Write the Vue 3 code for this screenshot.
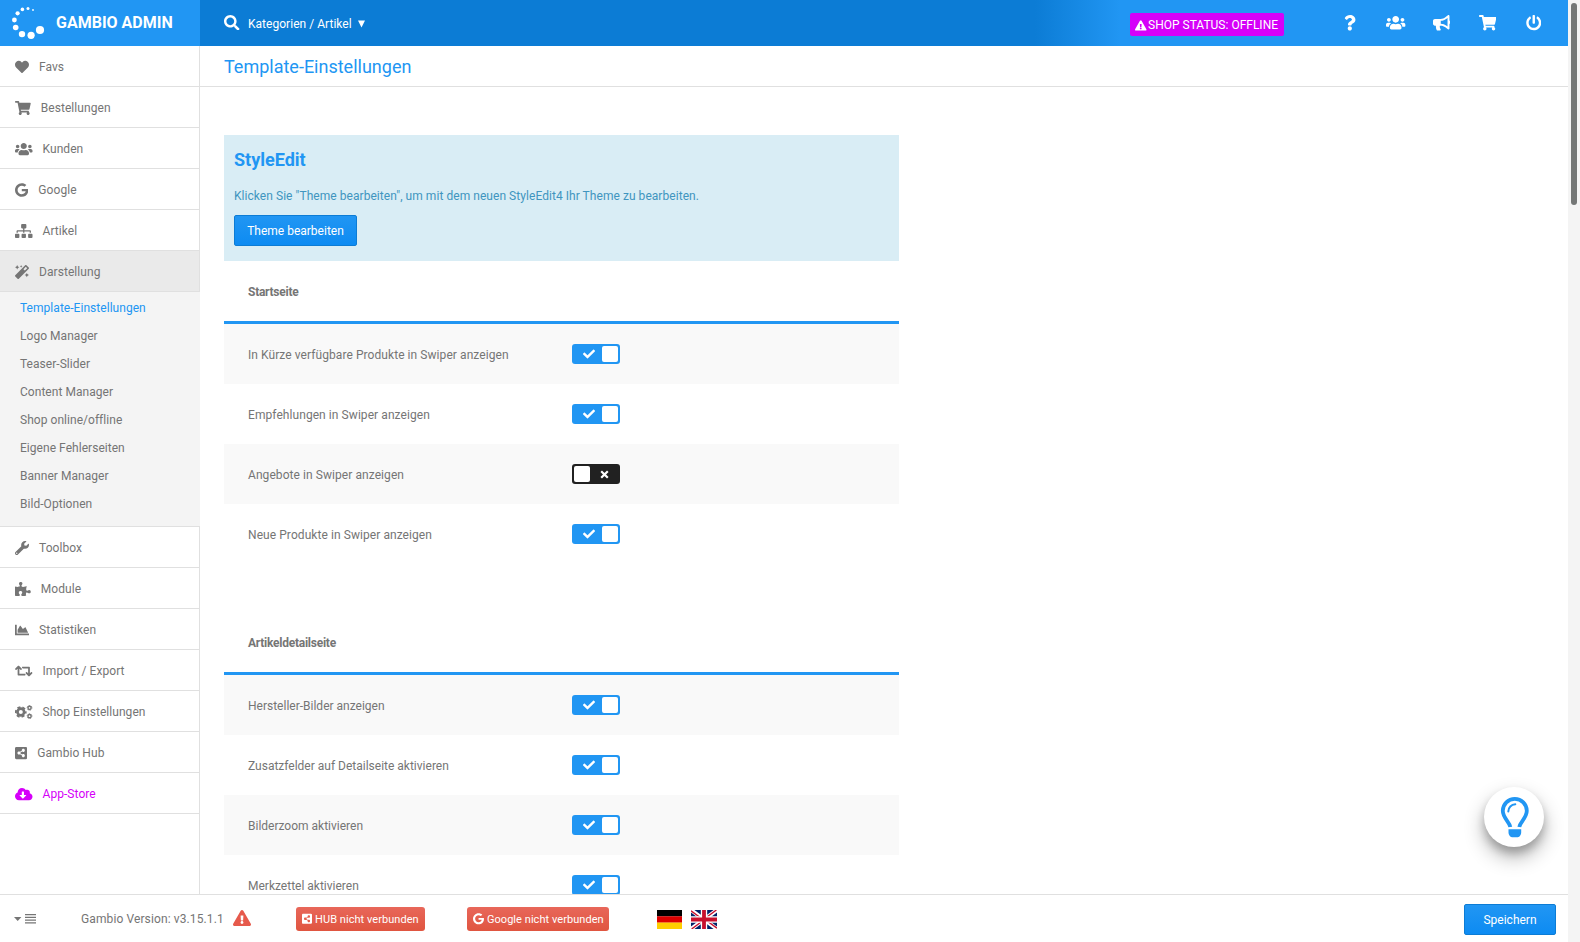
<script setup>
const icons = {
  heart: [512, 'M462.3 62.6C407.5 15.9 326 24.3 275.7 76.2L256 96.5l-19.7-20.3C186.1 24.3 104.5 15.9 49.7 62.6c-62.8 53.6-66.1 149.8-9.9 207.9l193.5 199.8c12.5 12.9 32.8 12.9 45.3 0l193.5-199.8c56.3-58.1 53-154.3-9.8-207.9z'],
  cart: [576, 'M528.12 301.319l47.273-208C578.806 78.301 567.391 64 551.99 64H159.208l-9.166-44.81C147.758 8.021 137.93 0 126.529 0H24C10.745 0 0 10.745 0 24v16c0 13.255 10.745 24 24 24h69.883l70.248 343.435C147.325 417.1 136 435.222 136 456c0 30.928 25.072 56 56 56s56-25.072 56-56c0-15.674-6.447-29.835-16.824-40h209.647C430.447 426.165 424 440.326 424 456c0 30.928 25.072 56 56 56s56-25.072 56-56c0-22.172-12.888-41.332-31.579-50.405l5.517-24.276c3.413-15.018-8.002-29.319-23.403-29.319H218.117l-6.545-32h293.145c11.206 0 20.92-7.754 23.403-18.681z'],
  users: [640, 'M96 224c35.3 0 64-28.7 64-64s-28.7-64-64-64-64 28.7-64 64 28.7 64 64 64zm448 0c35.3 0 64-28.7 64-64s-28.7-64-64-64-64 28.7-64 64 28.7 64 64 64zm32 32h-64c-17.6 0-33.5 7.1-45.1 18.6 40.3 22.1 68.9 62 75.1 109.4h66c17.7 0 32-14.3 32-32v-32c0-35.3-28.7-64-64-64zm-256 0c61.9 0 112-50.1 112-112S381.9 32 320 32 208 82.1 208 144s50.1 112 112 112zm76.8 32h-8.3c-20.8 10-43.9 16-68.5 16s-47.6-6-68.5-16h-8.3C179.6 288 128 339.6 128 403.2V432c0 26.5 21.5 48 48 48h288c26.5 0 48-21.5 48-48v-28.8c0-63.6-51.6-115.2-115.2-115.2zm-223.7-13.4C161.5 263.1 145.6 256 128 256H64c-35.3 0-64 28.7-64 64v32c0 17.7 14.3 32 32 32h65.9c6.3-47.4 34.9-87.3 75.2-109.4z'],
  google: [488, 'M488 261.8C488 403.3 391.1 504 248 504 110.8 504 0 393.2 0 256S110.8 8 248 8c66.8 0 123 24.5 166.3 64.9l-67.5 64.9C258.5 52.6 94.3 116.6 94.3 256c0 86.5 69.1 156.6 153.7 156.6 98.2 0 135-70.4 140.8-106.9H248v-85.3h236.1c2.3 12.7 3.9 24.9 3.9 41.4z'],
  sitemap: [640, 'M128 352H32c-17.67 0-32 14.33-32 32v96c0 17.67 14.33 32 32 32h96c17.67 0 32-14.33 32-32v-96c0-17.67-14.33-32-32-32zm-24-80h192v48h48v-48h192v48h48v-57.59c0-21.17-17.23-38.41-38.41-38.41H344v-64h40c17.67 0 32-14.33 32-32V32c0-17.67-14.33-32-32-32H256c-17.67 0-32 14.33-32 32v96c0 17.67 14.33 32 32 32h40v64H94.41C73.23 224 56 241.23 56 262.41V320h48v-48zm264 80h-96c-17.67 0-32 14.33-32 32v96c0 17.67 14.33 32 32 32h96c17.67 0 32-14.33 32-32v-96c0-17.67-14.33-32-32-32zm240 0h-96c-17.67 0-32 14.33-32 32v96c0 17.67 14.33 32 32 32h96c17.67 0 32-14.33 32-32v-96c0-17.67-14.33-32-32-32z'],
  magic: [512, 'M224 96l16-32 32-16-32-16-16-32-16 32-32 16 32 16 16 32zM80 160l26.66-53.33L160 80l-53.34-26.67L80 0 53.34 53.33 0 80l53.34 26.67L80 160zm352 128l-26.66 53.33L352 368l53.34 26.67L432 448l26.66-53.33L512 368l-53.34-26.67L432 288zm70.62-193.77L417.77 9.38C411.53 3.12 403.34 0 395.15 0c-8.19 0-16.38 3.12-22.63 9.38L9.38 372.52c-12.5 12.5-12.5 32.76 0 45.25l84.85 84.85c6.25 6.25 14.44 9.37 22.62 9.37 8.19 0 16.38-3.12 22.63-9.37l363.14-363.15c12.5-12.48 12.5-32.75 0-45.24zM359.45 203.46l-50.91-50.91 86.6-86.6 50.91 50.91-86.6 86.6z'],
  wrench: [512, 'M507.73 109.1c-2.24-9.03-13.54-12.09-20.12-5.51l-74.36 74.36-67.88-11.31-11.31-67.88 74.36-74.36c6.62-6.62 3.43-17.9-5.66-20.16-47.38-11.74-99.55.91-136.58 37.93-39.64 39.64-50.55 97.1-34.05 147.2L18.74 402.76c-24.99 24.99-24.99 65.51 0 90.5 24.99 24.99 65.51 24.99 90.5 0l213.21-213.21c50.12 16.71 107.47 5.68 147.37-34.22 37.07-37.07 49.7-89.32 37.91-136.73zM64 472c-13.25 0-24-10.75-24-24 0-13.26 10.75-24 24-24s24 10.74 24 24c0 13.25-10.75 24-24 24z'],
  puzzle: [576, 'M519.442 288.651c-41.519 0-59.5 31.593-82.058 31.593C377.409 320.244 432 144 432 144s-196.288 80-196.288-3.297c0-35.827 36.288-46.25 36.288-85.985C272 19.216 243.885 0 210.539 0c-34.654 0-66.366 18.891-66.366 56.346 0 41.364 31.711 59.277 31.711 81.75C175.885 207.719 0 166.758 0 166.758v333.237s178.635 41.047 178.635-28.662c0-22.473-40-40.107-40-81.471 0-37.456 29.25-56.346 63.577-56.346 33.673 0 61.788 19.216 61.788 54.717 0 39.735-36.288 50.158-36.288 85.985 0 60.803 129.675 25.73 181.23 25.73 0 0-34.725-120.101 25.827-120.101 35.962 0 46.423 36.152 86.308 36.152C556.712 416 576 387.99 576 354.443c0-34.199-18.962-65.792-56.558-65.792z'],
  chart: [512, 'M500 384c6.6 0 12 5.4 12 12v40c0 6.6-5.4 12-12 12H12c-6.6 0-12-5.4-12-12V76c0-6.6 5.4-12 12-12h40c6.6 0 12 5.4 12 12v308h436zM372.7 159.5L288 216l-85.3-113.7c-5.1-6.8-15.5-6.3-19.9 1L96 248v104h384l-89.9-187.8c-3.2-6.5-11.4-8.7-17.4-4.7z'],
  retweet: [640, 'M629.657 343.598L528.971 444.284c-9.373 9.372-24.568 9.372-33.941 0L394.343 343.598c-9.373-9.373-9.373-24.569 0-33.941l10.823-10.823c9.562-9.562 25.133-9.34 34.419.492L480 342.118V160H292.451a24.005 24.005 0 0 1-16.971-7.029l-16-16C244.361 121.851 255.069 96 276.451 96H520c13.255 0 24 10.745 24 24v222.118l40.416-42.792c9.285-9.831 24.856-10.054 34.419-.492l10.823 10.823c9.372 9.372 9.372 24.569-.001 33.941zm-265.138 15.431A23.999 23.999 0 0 0 347.548 352H160V169.881l40.416 42.792c9.286 9.831 24.856 10.054 34.419.491l10.822-10.822c9.373-9.373 9.373-24.569 0-33.941L144.971 67.716c-9.373-9.373-24.569-9.373-33.941 0L10.343 168.402c-9.373 9.373-9.373 24.569 0 33.941l10.822 10.822c9.562 9.562 25.133 9.34 34.419-.491L96 169.881V392c0 13.255 10.745 24 24 24h243.549c21.382 0 32.09-25.851 16.971-40.971l-16.001-16z'],
  share: [448, 'M448 80v352c0 26.51-21.49 48-48 48H48c-26.51 0-48-21.49-48-48V80c0-26.51 21.49-48 48-48h352c26.51 0 48 21.49 48 48zM304 296c-14.562 0-27.823 5.561-37.783 14.671l-67.958-40.775a56.339 56.339 0 0 0 0-27.793l67.958-40.775C276.177 210.439 289.438 216 304 216c30.928 0 56-25.072 56-56s-25.072-56-56-56-56 25.072-56 56c0 4.797.605 9.453 1.74 13.897l-67.958 40.775C171.823 205.561 158.562 200 144 200c-30.928 0-56 25.072-56 56s25.072 56 56 56c14.562 0 27.823-5.561 37.783-14.671l67.958 40.775a56.088 56.088 0 0 0-1.741 13.897c0 30.928 25.072 56 56 56s56-25.072 56-56S334.928 296 304 296z'],
  cloud: [640, 'M537.6 226.6c4.1-10.7 6.4-22.4 6.4-34.6 0-53-43-96-96-96-19.7 0-38.1 6-53.3 16.2C367 64.2 315.3 32 256 32c-88.4 0-160 71.6-160 160 0 2.7.1 5.4.2 8.1C40.2 219.8 0 273.2 0 336c0 79.5 64.5 144 144 144h368c70.7 0 128-57.3 128-128 0-61.9-44-113.6-102.4-125.4zm-132.9 88.7L299.3 420.7c-6.2 6.2-16.4 6.2-22.6 0L171.3 315.3c-10.1-10.1-2.9-27.3 11.3-27.3H248V176c0-8.8 7.2-16 16-16h48c8.8 0 16 7.2 16 16v112h65.4c14.2 0 21.4 17.2 11.3 27.3z'],
  search: [512, 'M505 442.7L405.3 343c-4.5-4.5-10.6-7-17-7H372c27.6-35.3 44-79.7 44-128C416 93.1 322.9 0 208 0S0 93.1 0 208s93.1 208 208 208c48.3 0 92.7-16.4 128-44v16.3c0 6.4 2.5 12.5 7 17l99.7 99.7c9.4 9.4 24.6 9.4 33.9 0l28.3-28.3c9.4-9.4 9.4-24.6.1-34zM208 336c-70.7 0-128-57.2-128-128 0-70.7 57.2-128 128-128 70.7 0 128 57.2 128 128 0 70.7-57.2 128-128 128z'],
  question: [384, 'M202.021 0C122.202 0 70.503 32.703 29.914 91.026c-7.363 10.58-5.093 25.086 5.178 32.874l43.138 32.709c10.373 7.865 25.132 6.026 33.253-4.148 25.049-31.381 43.63-49.449 82.757-49.449 30.764 0 68.816 19.799 68.816 49.631 0 22.552-18.617 34.134-48.993 51.164-35.423 19.86-82.299 44.576-82.299 106.405V320c0 13.255 10.745 24 24 24h72.471c13.255 0 24-10.745 24-24v-5.773c0-42.86 125.268-44.645 125.268-160.627C377.504 66.256 286.902 0 202.021 0zM192 373.459c-38.196 0-69.271 31.075-69.271 69.271 0 38.195 31.075 69.27 69.271 69.27s69.271-31.075 69.271-69.271-31.075-69.27-69.271-69.27z'],
  bullhorn: [576, 'M576 240c0-23.63-12.95-44.04-32-55.12V32.01C544 23.26 537.02 0 512 0c-7.12 0-14.19 2.38-19.98 7.02l-85.03 68.03C364.28 109.19 310.66 128 256 128H64c-35.35 0-64 28.65-64 64v96c0 35.35 28.65 64 64 64h33.7c-1.39 10.48-2.18 21.14-2.18 32 0 39.77 9.26 77.35 25.56 110.94 5.19 10.69 16.52 17.06 28.4 17.06h74.28c26.05 0 41.69-29.84 25.9-50.56-16.4-21.52-26.15-48.36-26.15-77.44 0-11.11 1.62-21.79 4.41-32H256c54.66 0 108.28 18.81 150.98 52.95l85.03 68.03a32.023 32.023 0 0 0 19.98 7.02c24.92 0 32-22.78 32-32V295.13C563.05 284.04 576 263.63 576 240zm-96 141.42l-33.05-26.44C392.95 311.78 325.12 288 256 288v-96c69.12 0 136.95-23.78 190.95-66.98L480 98.58v282.84z'],
  power: [512, 'M400 54.1c63 45 104 118.6 104 201.9 0 136.8-110.8 247.7-247.5 248C120 504.3 8.2 393 8 256.4 7.9 173.1 48.9 99.3 111.8 54.2c11.7-8.3 28-4.8 35 7.7L162.6 90c5.9 10.5 3.1 23.8-6.6 31-41.5 30.8-68 79.6-68 134.9-.1 92.3 74.5 168.1 168 168.1 91.6 0 168.6-74.2 168-169.1-.3-51.8-24.7-101.8-68.1-134-9.7-7.2-12.4-20.5-6.5-30.9l15.8-28.1c7-12.4 23.2-16.1 34.8-7.8zM296 264V24c0-13.3-10.7-24-24-24h-32c-13.3 0-24 10.7-24 24v240c0 13.3 10.7 24 24 24h32c13.3 0 24-10.7 24-24z'],
  warning: [576, 'M569.517 440.013C587.975 472.007 564.806 512 527.94 512H48.054c-36.937 0-59.999-40.055-41.577-71.987L246.423 23.985c18.467-32.009 64.72-31.951 83.154 0l239.94 416.028zM288 354c-25.405 0-46 20.595-46 46s20.595 46 46 46 46-20.595 46-46-20.595-46-46-46zm-43.673-165.346l7.418 136c.347 6.364 5.609 11.346 11.982 11.346h48.546c6.373 0 11.635-4.982 11.982-11.346l7.418-136c.375-6.874-5.098-12.654-11.982-12.654h-63.383c-6.884 0-12.356 5.78-11.981 12.654z'],
  check: [512, 'M173.898 439.404l-166.4-166.4c-9.997-9.997-9.997-26.206 0-36.204l36.203-36.204c9.997-9.998 26.207-9.998 36.204 0L192 312.69 432.095 72.596c9.997-9.997 26.207-9.997 36.204 0l36.203 36.204c9.997 9.997 9.997 26.206 0 36.204l-294.4 294.401c-9.998 9.997-26.207 9.997-36.204-.001z']
}
const vb = (n) => `0 0 ${icons[n][0]} 512`

const menu = [
  { icon: 'heart', label: 'Favs' },
  { icon: 'cart', label: 'Bestellungen' },
  { icon: 'users', label: 'Kunden' },
  { icon: 'google', label: 'Google' },
  { icon: 'sitemap', label: 'Artikel' },
  {
    icon: 'magic', label: 'Darstellung', active: true,
    children: ['Template-Einstellungen', 'Logo Manager', 'Teaser-Slider', 'Content Manager', 'Shop online/offline', 'Eigene Fehlerseiten', 'Banner Manager', 'Bild-Optionen']
  },
  { icon: 'wrench', label: 'Toolbox' },
  { icon: 'puzzle', label: 'Module' },
  { icon: 'chart', label: 'Statistiken' },
  { icon: 'retweet', label: 'Import / Export' },
  { icon: 'cogs', label: 'Shop Einstellungen' },
  { icon: 'share', label: 'Gambio Hub' },
  { icon: 'cloud', label: 'App-Store', store: true }
]
const tools = ['question', 'users', 'bullhorn', 'cart', 'power']
const sections = [
  {
    title: 'Startseite',
    rows: [
      ['In Kürze verfügbare Produkte in Swiper anzeigen', true],
      ['Empfehlungen in Swiper anzeigen', true],
      ['Angebote in Swiper anzeigen', false],
      ['Neue Produkte in Swiper anzeigen', true]
    ]
  },
  {
    title: 'Artikeldetailseite',
    rows: [
      ['Hersteller-Bilder anzeigen', true],
      ['Zusatzfelder auf Detailseite aktivieren', true],
      ['Bilderzoom aktivieren', true],
      ['Merkzettel aktivieren', true]
    ]
  }
]
</script>

<template>
  <div class="window">
    <div class="page">
      <header class="header">
        <div class="brand">
          <svg class="logo" width="34" height="34" viewBox="0 0 34 34" fill="#fff">
            <circle cx="22" cy="4" r=".9" /><circle cx="17" cy="2.6" r="1.5" /><circle cx="11.4" cy="3.4" r="1.8" />
            <circle cx="6.6" cy="7.3" r="2.1" /><circle cx="3.4" cy="14" r="2.4" /><circle cx="4.7" cy="21.5" r="2.8" />
            <circle cx="11" cy="28.1" r="3.2" /><circle cx="20.1" cy="29.3" r="3.6" /><circle cx="29" cy="24" r="4.1" />
          </svg>
          <span>GAMBIO ADMIN</span>
        </div>
        <div class="topbar">
          <svg class="search" width="15.5" height="15.500" :viewBox="vb('search')"><path :d="icons.search[1]" /></svg>
          <span class="scope">Kategorien / Artikel <svg width="7" height="8" viewBox="0 0 7 8"><path d="M0 .5h7L3.5 7.5z" /></svg></span>
          <div class="status">
            <svg width="11.5" height="11" :viewBox="vb('warning')"><path :d="icons.warning[1]" /></svg>
            <span>SHOP STATUS: OFFLINE</span>
          </div>
          <nav class="tools">
            <a v-for="t in tools" :key="t"><svg height="15.500" :viewBox="vb(t)"><path :d="icons[t][1]" /></svg></a>
          </nav>
        </div>
      </header>

      <div class="body">
        <aside class="sidebar">
          <template v-for="m in menu" :key="m.label">
            <div class="item" :class="{ active: m.active, store: m.store }">
              <svg v-if="m.icon === 'cogs'" width="17.5" height="14" viewBox="0 0 640 512" fill="none" stroke="currentColor">
                <circle cx="212" cy="256" r="122" stroke-width="96" />
                <circle cx="212" cy="256" r="180" stroke-width="68" stroke-dasharray="108.500 80" stroke-dashoffset="54" />
                <circle cx="532" cy="104" r="58" stroke-width="52" />
                <circle cx="532" cy="104" r="88" stroke-width="28" stroke-dasharray="52 40.200" stroke-dashoffset="26" />
                <circle cx="532" cy="408" r="58" stroke-width="52" />
                <circle cx="532" cy="408" r="88" stroke-width="28" stroke-dasharray="52 40.200" stroke-dashoffset="26" />
              </svg>
              <svg v-else height="14" :viewBox="vb(m.icon)"><path :d="icons[m.icon][1]" /></svg>
              <span>{{ m.label }}</span>
            </div>
            <div v-if="m.children" class="submenu">
              <a v-for="(c, i) in m.children" :key="c" :class="{ current: i === 0 }">{{ c }}</a>
            </div>
          </template>
        </aside>

        <main class="content">
          <h1>Template-Einstellungen</h1>
          <div class="panel">
            <div class="info">
              <h2>StyleEdit</h2>
              <p>Klicken Sie "Theme bearbeiten", um mit dem neuen StyleEdit4 Ihr Theme zu bearbeiten.</p>
              <button class="btn theme">Theme bearbeiten</button>
            </div>
            <section v-for="s in sections" :key="s.title">
              <h3>{{ s.title }}</h3>
              <div v-for="r in s.rows" :key="r[0]" class="row">
                <label>{{ r[0] }}</label>
                <span class="switch" :class="{ off: !r[1] }">
                  <svg v-if="r[1]" class="mark" width="12" height="12" :viewBox="vb('check')"><path :d="icons.check[1]" /></svg>
                  <i class="knob"></i>
                  <svg v-if="!r[1]" class="cross" width="9" height="9" viewBox="0 0 9 9"><path d="M1.2 1.2l6.600 6.600M7.800 1.200L1.200 7.800" /></svg>
                </span>
              </div>
            </section>
          </div>
        </main>
      </div>

      <footer class="footer">
        <svg class="collapse" width="22" height="12" viewBox="0 0 22 12">
          <path d="M0 4h7.4L3.7 8z" />
          <path d="M11 .9h11v1.300H11zM11 3.700h11v1.300H11zM11 6.500h11v1.300H11zM11 9.300h11v1.300H11z" />
        </svg>
        <span class="version">Gambio Version: v3.15.1.1</span>
        <svg class="alert" width="18" height="16" :viewBox="vb('warning')"><path :d="icons.warning[1]" /></svg>
        <span class="badge hub"><svg height="11.5" :viewBox="vb('share')"><path :d="icons.share[1]" /></svg><span>HUB nicht verbunden</span></span>
        <span class="badge goog"><svg height="11.5" :viewBox="vb('google')"><path :d="icons.google[1]" /></svg><span>Google nicht verbunden</span></span>
        <svg class="de" width="25" height="19" viewBox="0 0 25 19">
          <path fill="#000" d="M0 0h25v6.4H0z" /><path fill="#d00" d="M0 6.3h25v6.4H0z" /><path fill="#ffce00" d="M0 12.6h25V19H0z" />
        </svg>
        <svg class="uk" width="26" height="19" viewBox="0 0 26 19">
          <path fill="#012169" d="M0 0h26v19H0z" />
          <path stroke="#fff" stroke-width="4" d="M0 0l26 19M26 0L0 19" />
          <path stroke="#c8102e" stroke-width="1.4" d="M0 .8l12 8.7M26 18.2L14 9.5M25.4 0L13.5 8.7M.6 19l11.9-8.7" />
          <path stroke="#fff" stroke-width="6.4" d="M13 0v19M0 9.5h26" />
          <path stroke="#c8102e" stroke-width="3.8" d="M13 0v19M0 9.5h26" />
        </svg>
        <button class="btn save">Speichern</button>
      </footer>

      <div class="hint">
        <svg width="60" height="60" viewBox="0 0 60 60" fill="none" stroke="#2196f3">
          <path stroke-width="3.8" d="M26.3 40c-.8-5.400-7.500-9-7.500-16.200a12 12 0 0 1 24 0c0 7.200-6.700 10.800-7.500 16.200" />
          <path stroke-width="2" stroke-linecap="round" d="M24.300 24.500c0-4 3-7 7-7.200" />
          <path stroke="none" fill="#2196f3" d="M24.500 42.300h12.700v3.200c0 2-1.500 4.700-3.500 4.700h-5.700c-2 0-3.500-2.700-3.500-4.700z" />
        </svg>
      </div>
    </div>
    <div class="scrollbar"><div class="thumb"></div></div>
  </div>
</template>

<style>
body { margin: 0; overflow: hidden; }
</style>

<style scoped>
.window { display: flex; width: 1580px; height: 942px; overflow: hidden; background: #fff; color: #757575; font: 12px/20px Roboto, "Liberation Sans", sans-serif; }
.window * { box-sizing: border-box; }
svg { display: block; fill: currentColor; flex: none; }
svg[fill="none"] { fill: none; }
.page { position: relative; width: 1568px; display: flex; flex-direction: column; }
.scrollbar { width: 12px; background: #f4f4f4; padding: 3px; }
.thumb { width: 6px; height: 202px; border-radius: 3px; background: #747776; }

.header { display: flex; height: 46px; color: #fff; flex: none; }
.brand { width: 200px; display: flex; align-items: center; background: #2196f3; padding-left: 11px; font-size: 16px; font-weight: 700; }
.logo { margin-right: 11px; }
.topbar { flex: 1; display: flex; align-items: center; padding-left: 24px; padding-right: 11px; background: linear-gradient(to right, #0c7cd5 835px, #2196f3 920px); }
.search { margin-right: 8.5px; margin-top: -1px; }
.scope { display: flex; align-items: center; gap: 6px; padding-top: 1px; letter-spacing: .03px; }
.status { display: flex; align-items: center; gap: 1.5px; height: 23px; width: 154px; margin-left: auto; margin-top: 3px; padding-left: 5px; border-radius: 2px; background: #d500f9; white-space: nowrap; }
.status svg { margin-top: 1px; }
.tools { display: flex; margin-left: 43px; margin-right: .5px; }
.tools a { width: 45.9px; display: flex; justify-content: center; }

.body { display: flex; flex: 1; min-height: 0; overflow: hidden; }
.sidebar { width: 200px; border-right: 1px solid #e0e0e0; flex: none; }
.item { display: flex; align-items: center; gap: 10px; height: 41px; padding: 1px 0 0 15px; border-bottom: 1px solid #e0e0e0; letter-spacing: .06px; }
.item span { padding-top: 1px; }
.item.active { background: #eaeaea; }
.item.store { color: #d500f9; }
.submenu { height: 235px; padding: 2px 0 0 20px; margin-right: -1px; background: #f4f4f4; border-bottom: 1px solid #e0e0e0; letter-spacing: .04px; }
.submenu a { display: block; line-height: 28px; }
.submenu .current { color: #2196f3; }

.content { flex: 1; min-width: 0; }
h1 { margin: 0; height: 41px; padding-left: 24px; border-bottom: 1px solid #e0e0e0; font-size: 18px; font-weight: 400; line-height: 41px; color: #2196f3; }
.panel { width: 675px; margin: 48px 0 0 24px; }
.info { height: 126px; padding: 14px 10px 0; background: #d9edf5; color: #4095bf; }
h2 { margin: 0; font-size: 18px; line-height: 22px; font-weight: 700; color: #2196f3; }
p { margin: 15px 0 9px; letter-spacing: .05px; }
.btn { display: block; height: 31px; padding: 0; border: 1px solid #0c7cd5; border-radius: 2px; background: linear-gradient(#2196f3, #0d8bf2); color: #fff; font: inherit; }
.theme { width: 123px; }
section + section { margin-top: 48px; }
h3 { margin: 0; height: 63px; padding: 21px 24px 0; border-bottom: 3px solid #2196f3; font-size: 12px; line-height: 20px; font-weight: 700; letter-spacing: -.25px; }
.row { display: flex; height: 60px; padding: 20px 24px; }
.row:nth-child(even) { background: #f9f9f9; }
.row label { width: 324px; padding-top: 1px; }
section:nth-child(2) label { letter-spacing: .07px; }
.switch { display: flex; align-items: center; width: 48px; height: 20px; padding: 2px; border-radius: 3px; background: #2196f3; color: #fff; }
.switch.off { background: #212121; }
.mark { margin-left: 9px; }
.knob { width: 16px; height: 16px; border-radius: 2px; background: #fff; margin-left: auto; }
.off .knob { margin-left: 0; }
.cross { fill: none; stroke: #fff; stroke-width: 2.2; margin: 1px 0 0 9.500px; }

.footer { display: flex; align-items: center; height: 48px; flex: none; border-top: 1px solid #e0e0e0; padding: 1px 12px 0 14px; background: #fff; }
.collapse { margin-top: -1px; }
.version { margin-left: 45px; width: 143px; letter-spacing: .11px; white-space: nowrap; }
.alert { margin-left: 9px; color: #e65a4c; margin-top: -2px; }
.badge { display: flex; align-items: center; height: 24px; gap: 3px; padding-left: 6px; border-radius: 3px; background: linear-gradient(#e8675a, #e05540); color: #fff; font-size: 11px; white-space: nowrap; letter-spacing: .05px; }
.badge span { padding-top: 1px; }
.hub { width: 129px; margin-left: 45px; }
.goog { width: 142px; margin-left: 42px; }
.de { margin-left: 48px; }
.uk { margin-left: 9px; }
.save { width: 92px; margin-left: auto; margin-top: 1px; }
.hint { position: absolute; left: 1484px; top: 787px; width: 60px; height: 60px; border-radius: 50%; background: #fff; box-shadow: 0 10px 20px rgba(0, 0, 0, .3), 0 6px 8px rgba(0, 0, 0, .2); }
</style>
